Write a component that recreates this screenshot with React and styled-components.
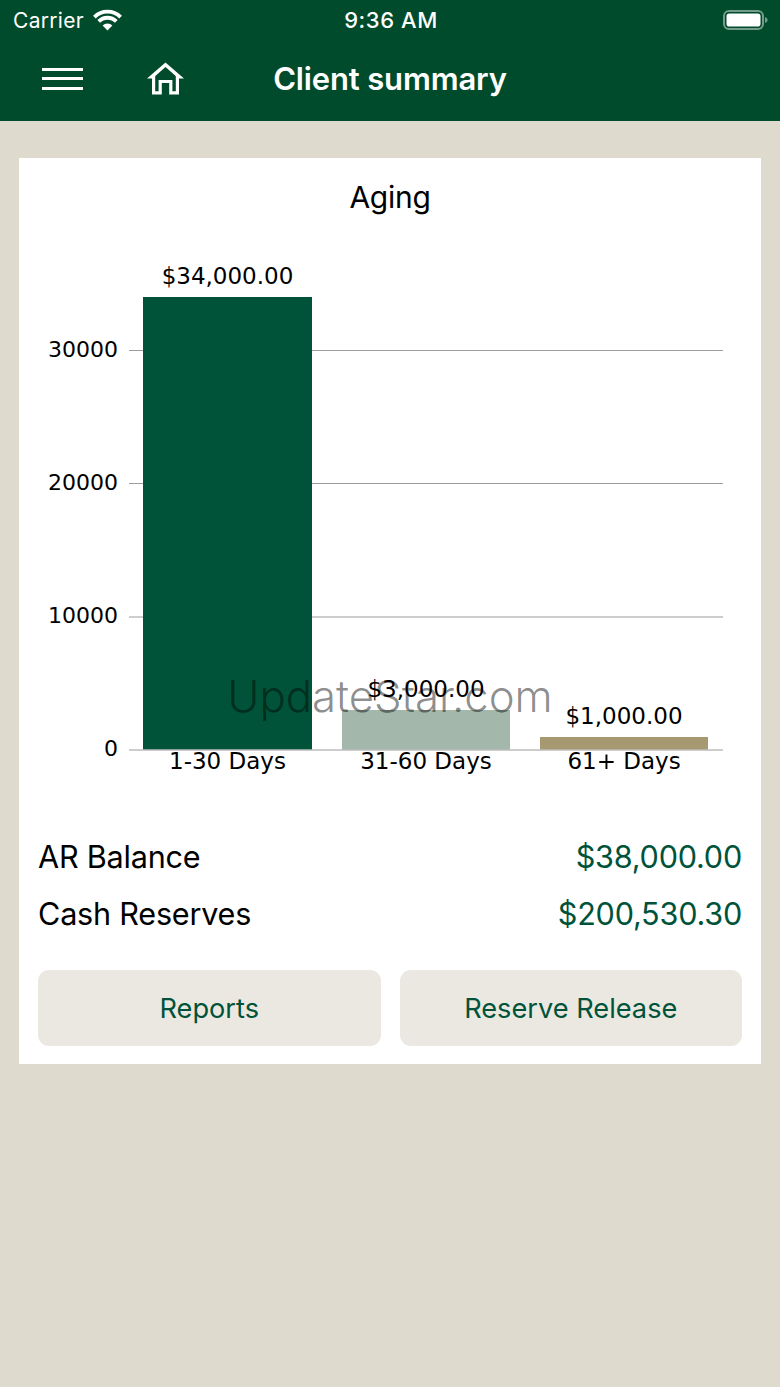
import React from "react";
import styled, { createGlobalStyle } from "styled-components";

const Global = createGlobalStyle`
  html, body { margin: 0; padding: 0; background: #dedacd; }
  body { font-family: Inter, "Liberation Sans", sans-serif; -webkit-font-smoothing: antialiased; }
  * { box-sizing: border-box; }
`;

const Page = styled.div`
  position: relative;
  width: 780px;
  height: 1387px;
  background: #dedacd;
  overflow: hidden;
`;
const Header = styled.header`
  height: 121px;
  background: #004b2b;
  color: #fff;
  display: flex;
  flex-direction: column;
`;
const StatusBar = styled.div`
  height: 40px;
  display: grid;
  grid-template-columns: 1fr auto 1fr;
  align-items: center;
  padding: 0 11px 0 13px;
  font-size: 21px;
`;
const StatusLeft = styled.div`
  display: flex;
  align-items: center;
  gap: 9px;
  font-weight: 400;
  letter-spacing: 0.3px;
`;
const Clock = styled.div`
  font-size: 22px;
  font-weight: 500;
  letter-spacing: 0.55px;
`;
const StatusRight = styled.div`
  display: flex;
  justify-content: flex-end;
`;
const NavBar = styled.div`
  position: relative;
  flex: 1;
  display: flex;
  align-items: center;
  padding: 0 0 4px 42px;
  gap: 64px;
`;
const MenuIcon = styled.div`
  width: 41px;
  height: 22px;
  display: flex;
  flex-direction: column;
  justify-content: space-between;
  & > span { display: block; height: 3px; background: #fff; }
`;
const Title = styled.h1`
  position: absolute;
  left: 0;
  right: 0;
  top: 19px;
  margin: 0;
  text-align: center;
  font-size: 31px;
  line-height: 40px;
  font-weight: 600;
  letter-spacing: -0.15px;
`;
const Card = styled.section`
  margin: 37px 19px 0;
  height: 906px;
  background: #fff;
  display: flex;
  flex-direction: column;
`;
const ChartTitle = styled.h2`
  margin: 0;
  padding-top: 20px;
  height: 79px;
  text-align: center;
  font-size: 30px;
  line-height: 38px;
  font-weight: 400;
  letter-spacing: -0.25px;
  color: #000;
`;
const ChartSvg = styled.svg`
  display: block;
  width: 742px;
  height: 601px;
  & text {
    font-family: "DejaVu Sans", Verdana, sans-serif;
    font-size: 23px;
    fill: #000;
  }
  & text.tick { font-size: 22px; }
`;
const Rows = styled.div`
  display: flex;
  flex-direction: column;
  gap: 19px;
  padding: 0 19px;
`;
const Row = styled.div`
  display: flex;
  justify-content: space-between;
  align-items: center;
  height: 38px;
  font-size: 30.6px;
  line-height: 38px;
  letter-spacing: -0.22px;
  color: #000;
`;
const Amount = styled.span`
  color: #00533a;
`;
const Buttons = styled.div`
  display: grid;
  grid-template-columns: 1fr 1fr;
  gap: 19px;
  padding: 0 19px;
  margin-top: 37px;
`;
const Button = styled.button`
  height: 76px;
  border: 0;
  border-radius: 11px;
  background: #ebe8e1;
  color: #00533a;
  font-family: inherit;
  font-size: 27.2px;
  padding: 0;
`;
const Watermark = styled.div`
  position: absolute;
  left: 0;
  right: 0;
  top: 667px;
  text-align: center;
  font-family: Inter, sans-serif;
  font-weight: 300;
  font-size: 43.7px;
  line-height: 60px;
  color: rgba(0, 0, 0, 0.46);
  pointer-events: none;
`;

const Wifi = () => (
  <svg width="29" height="22" viewBox="0 0 29 22" fill="none" stroke="#fff" strokeWidth="3.8">
    <path d="M1.4 8.1A18.5 18.5 0 0 1 27.6 8.1" />
    <path d="M5.7 12.4A12.4 12.4 0 0 1 23.3 12.4" />
    <path d="M14.5 21.5 9.6 16.6A7 7 0 0 1 19.4 16.6Z" fill="#fff" stroke="none" />
  </svg>
);

const Battery = () => (
  <svg width="46" height="20" viewBox="0 0 46 20">
    <rect x="1" y="1" width="39" height="18" rx="5" fill="none" stroke="#fff" strokeOpacity="0.45" strokeWidth="2" />
    <rect x="3.5" y="3.5" width="34" height="13" rx="2.8" fill="#fff" />
    <path d="M42 7v6c1.6-.5 2.6-1.6 2.6-3S43.6 7.5 42 7z" fill="#fff" fillOpacity="0.45" />
  </svg>
);

const Home = () => (
  <svg width="37" height="33" viewBox="0 0 37 33">
    <path d="M18.5 0.5 37 16.5H31.5L18.5 5 5.5 16.5H0z" fill="#fff" />
    <path d="M6.6 14v16.9h6.6V19.5h10.6v11.4h6.6V14" fill="none" stroke="#fff" strokeWidth="3.2" />
  </svg>
);

const bars = [
  { x: 124, w: 169, top: 139, color: "#005338", value: "$34,000.00", label: "1-30 Days" },
  { x: 323, w: 168, top: 552, color: "#a3b8ab", value: "$3,000.00", label: "31-60 Days" },
  { x: 521, w: 168, top: 579, color: "#a69871", value: "$1,000.00", label: "61+ Days" },
];
const ticks = [
  { y: 459, label: "10000" },
  { y: 325.5, label: "20000" },
  { y: 192.5, label: "30000" },
];

export default function App() {
  return (
    <Page>
      <Global />
      <Header>
        <StatusBar>
          <StatusLeft>Carrier <Wifi /></StatusLeft>
          <Clock>9:36 AM</Clock>
          <StatusRight><Battery /></StatusRight>
        </StatusBar>
        <NavBar>
          <MenuIcon><span /><span /><span /></MenuIcon>
          <Home />
          <Title>Client summary</Title>
        </NavBar>
      </Header>
      <Card>
        <ChartTitle>Aging</ChartTitle>
        <ChartSvg viewBox="0 79 742 601" width="742" height="601">
          {ticks.map((t) => (
            <g key={t.label}>
              <line x1="110" x2="704" y1={t.y} y2={t.y} stroke="#9c9c9c" strokeWidth="1.2" />
              <text className="tick" x="99" y={t.y + 6} textAnchor="end">{t.label}</text>
            </g>
          ))}
          {bars.map((b) => (
            <g key={b.label}>
              <rect x={b.x} y={b.top} width={b.w} height={592 - b.top} fill={b.color} />
              <text x={b.x + b.w / 2} y={b.top - 13} textAnchor="middle">{b.value}</text>
              <text x={b.x + b.w / 2} y={611} textAnchor="middle">{b.label}</text>
            </g>
          ))}
          <line x1="110" x2="704" y1="592" y2="592" stroke="#bdbdbd" strokeWidth="1.5" />
          <text className="tick" x="99" y="598" textAnchor="end">0</text>
        </ChartSvg>
        <Rows>
          <Row>AR Balance <Amount>$38,000.00</Amount></Row>
          <Row>Cash Reserves <Amount>$200,530.30</Amount></Row>
        </Rows>
        <Buttons>
          <Button>Reports</Button>
          <Button>Reserve Release</Button>
        </Buttons>
      </Card>
      <Watermark>UpdateStar.com</Watermark>
    </Page>
  );
}
